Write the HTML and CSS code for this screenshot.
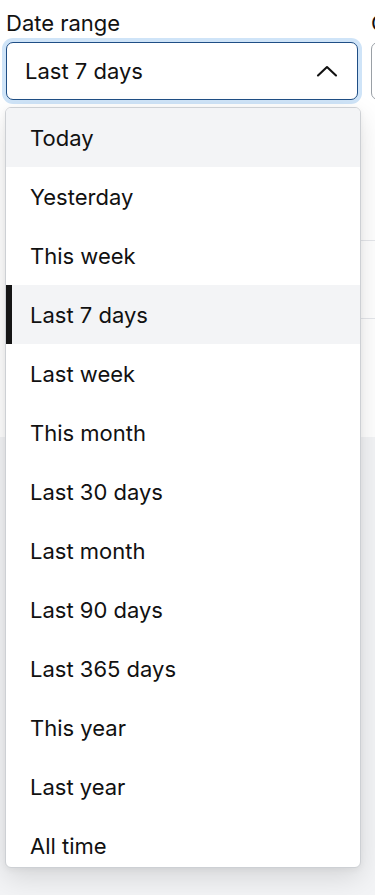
FILE: index.html
```html
<!DOCTYPE html>
<html lang="en">
<head>
<meta charset="utf-8">
<meta name="viewport" content="width=device-width, initial-scale=1">
<title>Date range</title>
<link rel="stylesheet" href="styles.css">
</head>
<body>
<div class="page">
  <section class="panel">
    <div class="filters">
      <div class="field field-date">
        <div class="label">Date range</div>
        <div class="select-wrap">
          <div class="select select-open">
            <span class="select-value">Last 7 days</span>
            <svg class="chevron" width="22" height="12" viewBox="0 0 22 12" aria-hidden="true"><path d="M2 10.5 L11 2 L20 10.5" fill="none" stroke="#111" stroke-width="2.1" stroke-linecap="round" stroke-linejoin="round"/></svg>
          </div>
          <ul class="menu">
            <li class="option option-hover">Today</li>
            <li class="option">Yesterday</li>
            <li class="option">This week</li>
            <li class="option option-selected">Last 7 days</li>
            <li class="option">Last week</li>
            <li class="option">This month</li>
            <li class="option">Last 30 days</li>
            <li class="option">Last month</li>
            <li class="option">Last 90 days</li>
            <li class="option">Last 365 days</li>
            <li class="option">This year</li>
            <li class="option">Last year</li>
            <li class="option">All time</li>
          </ul>
        </div>
      </div>
      <div class="field">
        <div class="label">Compare to</div>
        <div class="select">
          <span class="select-value">Previous period</span>
        </div>
      </div>
    </div>
    <div class="rows">
      <div class="row row-first"></div>
      <div class="row"></div>
      <div class="row row-last"></div>
    </div>
  </section>
</div>
</body>
</html>
```
FILE: styles.css
```css
* { box-sizing: border-box; }

html, body {
  margin: 0;
  padding: 0;
}

body {
  background: #f3f4f6;
  font-family: "Inter", "Liberation Sans", Arial, sans-serif;
  color: #111;
  overflow: hidden;
}

.page {
  width: 375px;
  min-height: 895px;
  overflow: hidden;
}

.panel {
  background: #fff;
  height: 437px;
}

.filters {
  display: grid;
  grid-template-columns: 352px 352px;
  column-gap: 13px;
  padding: 10px 0 0 6px;
}

.label {
  font-size: 22px;
  line-height: 26px;
  color: #111;
  margin-bottom: 6px;
  white-space: nowrap;
}

.select-wrap {
  position: relative;
}

.select {
  height: 58px;
  border: 1px solid #9aa0a6;
  border-radius: 7px;
  display: flex;
  align-items: center;
  justify-content: space-between;
  padding: 0 19px 0 18px;
  background: #fff;
  font-size: 22px;
  white-space: nowrap;
}

.select-open {
  border: 1.5px solid #1f4e85;
  box-shadow: 0 0 0 4px #cfe4f8;
}

.chevron {
  display: block;
}

.menu {
  position: absolute;
  top: 65px;
  left: -1px;
  width: 356px;
  height: 761px;
  margin: 0;
  padding: 0;
  list-style: none;
  background: #fff;
  border: 1px solid #cdd0d4;
  border-radius: 6px;
  box-shadow: 0 10px 28px rgba(0, 0, 0, 0.12), 0 2px 6px rgba(0, 0, 0, 0.05);
  overflow: hidden;
  z-index: 10;
}

.option {
  height: 59px;
  display: flex;
  align-items: center;
  padding-left: 24px;
  font-size: 22px;
  color: #111;
}

.option-hover {
  background: #f3f4f6;
}

.option-selected {
  background: #f3f4f6;
  box-shadow: inset 6px 0 0 #151515;
}

.rows {
  margin-top: 82px;
  padding-left: 6px;
}

.row {
  height: 78px;
  border-bottom: 1px solid #e5e7eb;
}

.row-first {
  height: 59px;
}

.row-last {
  border-bottom: none;
}
```
